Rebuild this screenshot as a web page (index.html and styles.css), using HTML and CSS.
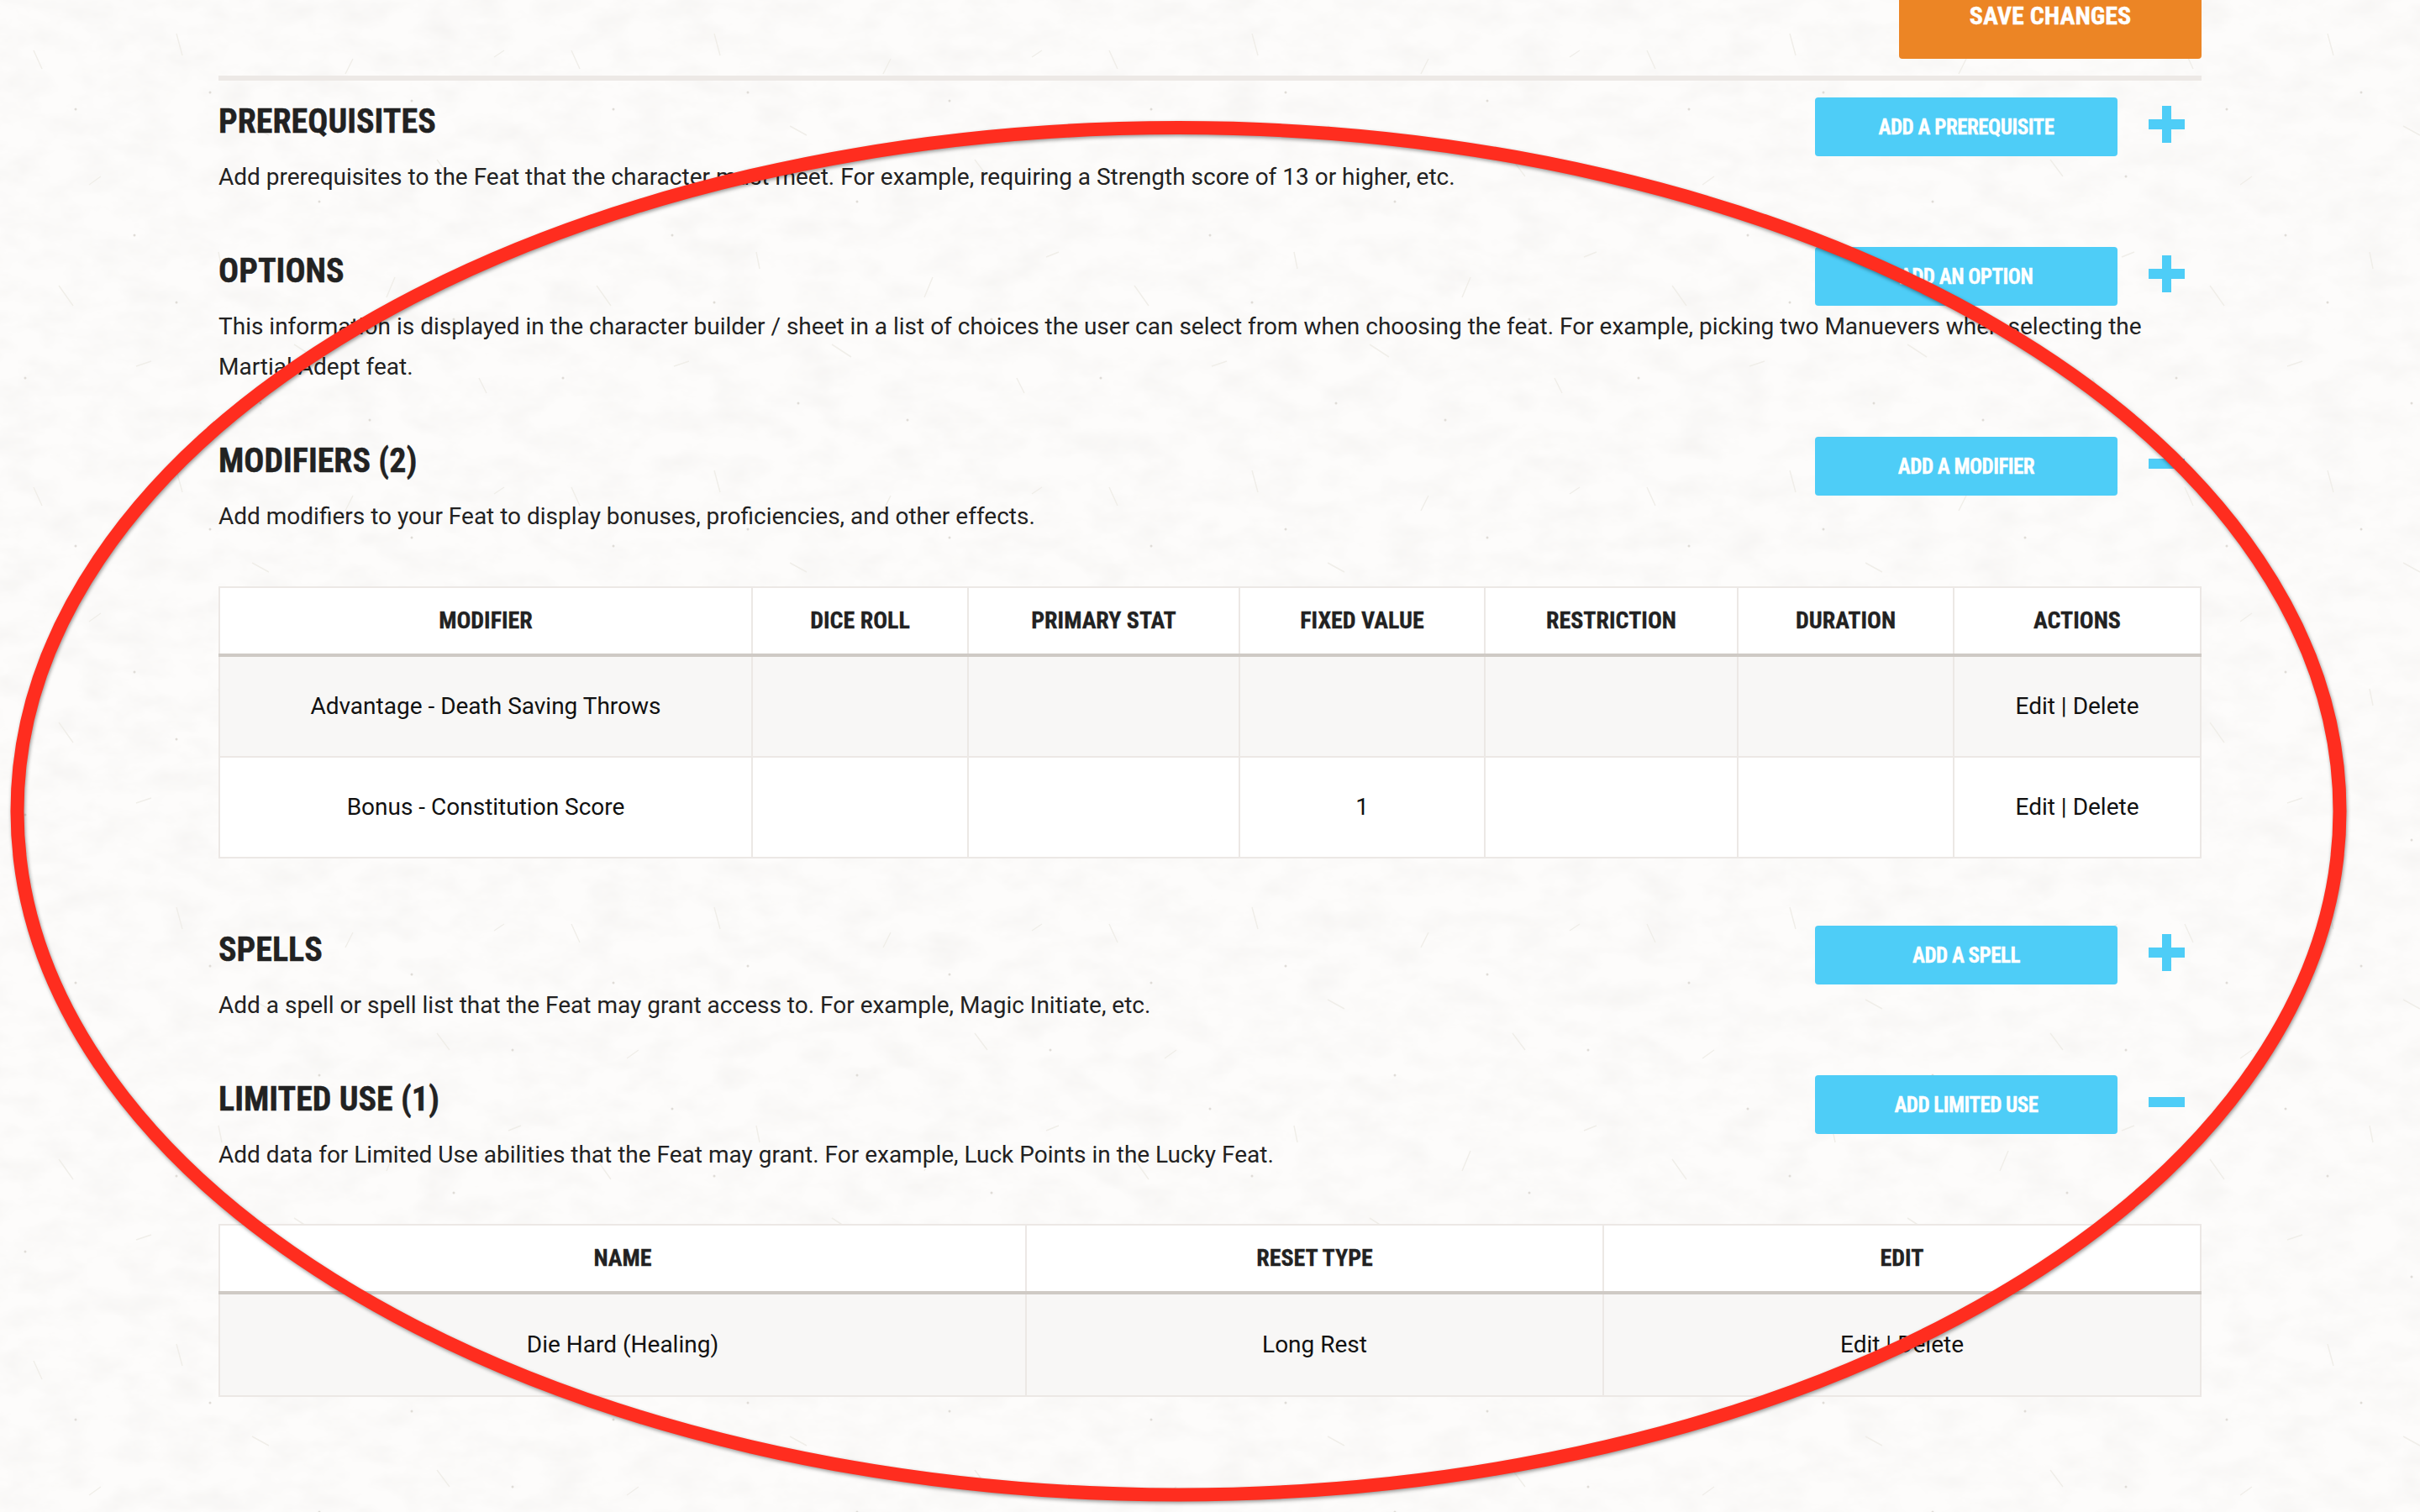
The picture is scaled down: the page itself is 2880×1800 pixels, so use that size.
FILE: index.html
```html
<!DOCTYPE html>
<html lang="en">
<head>
  <meta charset="UTF-8">
  <title>Edit Feat</title>
  <link rel="stylesheet" href="styles.css">
</head>
<body>
  <svg class="paper" width="2880" height="1800">
    <defs>
      <filter id="mottle" x="0" y="0" width="100%" height="100%">
        <feTurbulence type="fractalNoise" baseFrequency="0.02 0.035" numOctaves="4" seed="7"/>
        <feColorMatrix type="matrix" values="0 0 0 0 0.55  0 0 0 0 0.53  0 0 0 0 0.5  0.14 0.14 0 0 -0.115"/>
      </filter>
      <pattern id="fibres" width="640" height="520" patternUnits="userSpaceOnUse">
        <g fill="none" stroke="#f0eee9" stroke-width="1.5">
          <path d="M40 60l10 22M120 210l-14 10M210 40l7 26M300 150l20 11M420 70l-9 18M520 190l15 20M600 60l-12 8"/>
          <path d="M70 340l17 24M180 430l-18 6M260 300l4 20M350 410l23 15M470 330l-10 24M570 450l9 18M620 300l-15 6"/>
        </g>
        <g fill="#dfdcd7">
          <circle cx="90" cy="130" r="1.5"/><circle cx="250" cy="110" r="1.5"/><circle cx="380" cy="240" r="1.5"/>
          <circle cx="490" cy="120" r="1.5"/><circle cx="160" cy="280" r="1.5"/><circle cx="310" cy="480" r="1.5"/>
          <circle cx="540" cy="380" r="1.5"/><circle cx="30" cy="450" r="1.5"/><circle cx="440" cy="500" r="1.5"/>
          <circle cx="610" cy="210" r="1.5"/><circle cx="210" cy="360" r="1.5"/>
        </g>
      </pattern>
    </defs>
    <rect width="2880" height="1800" filter="url(#mottle)"/>
    <rect width="2880" height="1800" fill="url(#fibres)"/>
  </svg>

  <div class="page">
    <div class="top-bar">
      <button class="btn-save">SAVE CHANGES</button>
    </div>

    <section class="block">
      <div class="block-head">
        <h2>PREREQUISITES</h2>
        <button class="btn-add">ADD A PREREQUISITE</button>
        <span class="toggle plus"></span>
      </div>
      <p>Add prerequisites to the Feat that the character must meet. For example, requiring a Strength score of 13 or higher, etc.</p>
    </section>

    <section class="block">
      <div class="block-head">
        <h2>OPTIONS</h2>
        <button class="btn-add">ADD AN OPTION</button>
        <span class="toggle plus"></span>
      </div>
      <p>This information is displayed in the character builder / sheet in a list of choices the user can select from when choosing the feat. For example, picking two Manuevers when selecting the Martial Adept feat.</p>
    </section>

    <section class="block block-table">
      <div class="block-head">
        <h2>MODIFIERS (2)</h2>
        <button class="btn-add">ADD A MODIFIER</button>
        <span class="toggle minus"></span>
      </div>
      <p>Add modifiers to your Feat to display bonuses, proficiencies, and other effects.</p>
      <table class="grid">
        <colgroup>
          <col class="c-modifier"><col class="c-dice"><col class="c-stat"><col class="c-fixed"><col class="c-restrict"><col class="c-duration"><col class="c-actions">
        </colgroup>
        <thead>
          <tr><th>MODIFIER</th><th>DICE ROLL</th><th>PRIMARY STAT</th><th>FIXED VALUE</th><th>RESTRICTION</th><th>DURATION</th><th>ACTIONS</th></tr>
        </thead>
        <tbody>
          <tr><td>Advantage - Death Saving Throws</td><td></td><td></td><td></td><td></td><td></td><td>Edit | Delete</td></tr>
          <tr><td>Bonus - Constitution Score</td><td></td><td></td><td>1</td><td></td><td></td><td>Edit | Delete</td></tr>
        </tbody>
      </table>
    </section>

    <section class="block">
      <div class="block-head">
        <h2>SPELLS</h2>
        <button class="btn-add">ADD A SPELL</button>
        <span class="toggle plus"></span>
      </div>
      <p>Add a spell or spell list that the Feat may grant access to. For example, Magic Initiate, etc.</p>
    </section>

    <section class="block">
      <div class="block-head">
        <h2>LIMITED USE (1)</h2>
        <button class="btn-add">ADD LIMITED USE</button>
        <span class="toggle minus"></span>
      </div>
      <p>Add data for Limited Use abilities that the Feat may grant. For example, Luck Points in the Lucky Feat.</p>
      <table class="grid grid-limited">
        <colgroup>
          <col class="c-name"><col class="c-reset"><col class="c-edit">
        </colgroup>
        <thead>
          <tr><th>NAME</th><th>RESET TYPE</th><th>EDIT</th></tr>
        </thead>
        <tbody>
          <tr><td>Die Hard (Healing)</td><td>Long Rest</td><td>Edit | Delete</td></tr>
        </tbody>
      </table>
    </section>
  </div>

  <svg class="scribble" width="2880" height="1800">
    <ellipse cx="1402.5" cy="965.75" rx="1382" ry="813.75" fill="none" stroke="#ff2d1f" stroke-width="16"/>
  </svg>
</body>
</html>
```

FILE: styles.css
```css
html, body { margin: 0; padding: 0; }
body { width: 2880px; height: 1800px; overflow: hidden; background: #fdfcfb; color: #222; font-family: Roboto, Arial, sans-serif; font-size: 28px; position: relative; }
.paper { position: absolute; left: 0; top: 0; }
.scribble { position: absolute; left: 0; top: 0; filter: drop-shadow(1px 2px 2px rgba(0,0,0,0.4)); }
.page { position: relative; width: 2360px; margin-left: 260px; }

.top-bar { display: flex; justify-content: flex-end; border-bottom: 6px solid #ede9e6; padding-bottom: 20px; margin-bottom: 20px; }
.btn-save { width: 360px; height: 70px; border: 0; border-radius: 0 0 4px 4px; background: #ec8525; color: #fff; font-family: Roboto, sans-serif; font-stretch: 75%; font-weight: 700; font-size: 30px; padding: 0 0 34px; -webkit-text-stroke: 0.4px #fff; }

.block { margin-bottom: 59px; }
.block-table { margin-bottom: 80px; }
.block-head { display: flex; align-items: flex-start; padding-right: 20px; }
.block-head h2 { flex: 1; margin: 0; padding-top: 2px; font-size: 40px; line-height: 54px; font-weight: 700; font-stretch: 75%; color: #222; -webkit-text-stroke: 0.4px #222; }
.block p { margin: 1px 0 0; font-size: 28px; line-height: 48px; color: #222; }

.btn-add { width: 360px; height: 70px; border: 0; border-radius: 4px; background: #4ecdf7; color: #fff; font-family: Roboto, sans-serif; font-stretch: 75%; font-weight: 700; font-size: 25px; letter-spacing: -0.5px; padding: 0; -webkit-text-stroke: 0.3px #fff; }
.toggle { width: 43px; height: 44px; margin: 10px 0 0 37px; position: relative; }
.toggle::before { content: ""; position: absolute; left: 0; right: 0; top: 16px; height: 12px; background: #4ecdf7; }
.plus::after { content: ""; position: absolute; left: 16px; top: 0; width: 11px; height: 44px; background: #4ecdf7; }

.grid { width: 2358px; table-layout: fixed; border-collapse: collapse; margin-top: 59px; background: #fff; }
.grid-limited { margin-top: 58px; }
.grid th, .grid td { border: 2px solid #ece8e5; text-align: center; padding: 0; }
.grid th { height: 76px; padding-bottom: 2px; border-bottom: 4px solid #cfcac5; font-size: 28px; font-weight: 700; font-stretch: 75%; color: #222; -webkit-text-stroke: 0.3px #222; }
.grid td { height: 116px; padding-bottom: 2px; color: #111; font-size: 28px; }
.grid-limited td { height: 118px; }
.grid tbody tr:nth-child(odd) td { background: #f8f7f6; }

.c-modifier { width: 634px; }
.c-dice { width: 257px; }
.c-stat { width: 323px; }
.c-fixed { width: 292px; }
.c-restrict { width: 301px; }
.c-duration { width: 257px; }
.c-actions { width: 294px; }
.c-name { width: 960px; }
.c-reset { width: 687px; }
.c-edit { width: 711px; }
```
